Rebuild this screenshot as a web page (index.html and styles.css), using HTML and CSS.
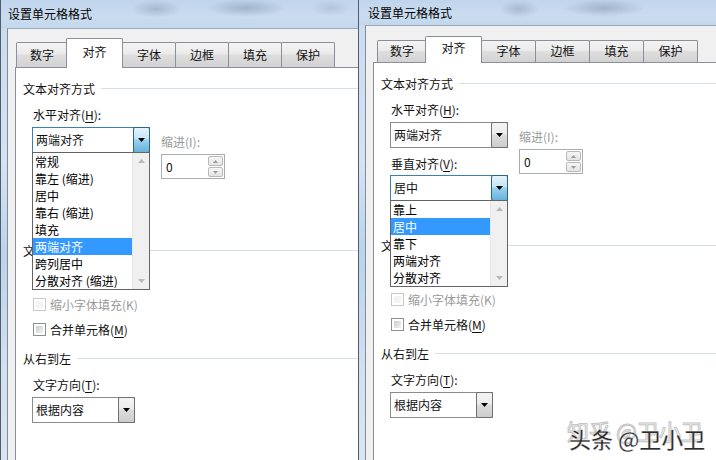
FILE: index.html
```html
<!DOCTYPE html>
<html lang="zh-CN">
<head>
<meta charset="utf-8">
<title>设置单元格格式</title>
<link rel="stylesheet" href="styles.css">
</head>
<body>
<div class="screen">

  <section class="win win-a">
    <div class="titlebar"><span class="title">设置单元格格式</span></div>
    <div class="client">
      <div class="tabs">
        <div class="tab tab-first">数字</div>
        <div class="tab tab-sel">对齐</div>
        <div class="tab">字体</div>
        <div class="tab">边框</div>
        <div class="tab">填充</div>
        <div class="tab">保护</div>
      </div>
      <div class="panel">
        <div class="group-head"><span>文本对齐方式</span></div>
        <div class="align-grid">
          <div class="label lbl-h">水平对齐(<u>H</u>):</div>
          <div class="combo combo-wide combo-1 is-open">
            <span class="combo-text">两端对齐</span>
            <span class="combo-btn"><svg width="7" height="4" viewBox="0 0 7 4"><path d="M0 0H7L3.5 4Z" fill="#000"/></svg></span>
            <div class="list">
              <div class="list-items">
                <div class="item">常规</div>
                <div class="item">靠左 (缩进)</div>
                <div class="item">居中</div>
                <div class="item">靠右 (缩进)</div>
                <div class="item">填充</div>
                <div class="item is-sel">两端对齐</div>
                <div class="item">跨列居中</div>
                <div class="item">分散对齐 (缩进)</div>
              </div>
              <div class="list-scroll">
                <svg width="7" height="4" viewBox="0 0 7 4"><path d="M0 4H7L3.5 0Z" fill="#b8b8b8"/></svg>
                <svg width="7" height="4" viewBox="0 0 7 4"><path d="M0 0H7L3.5 4Z" fill="#b8b8b8"/></svg>
              </div>
            </div>
          </div>
          <div class="indent">
            <div class="label is-disabled">缩进(I):</div>
            <div class="spin">
              <span class="spin-text">0</span>
              <span class="spin-btns">
                <span class="spin-btn"><svg width="5" height="3" viewBox="0 0 5 3"><path d="M0 3H5L2.5 0Z" fill="#9a9a9a"/></svg></span>
                <span class="spin-btn"><svg width="5" height="3" viewBox="0 0 5 3"><path d="M0 0H5L2.5 3Z" fill="#9a9a9a"/></svg></span>
              </span>
            </div>
          </div>
          <div class="label lbl-v is-covered">垂直对齐(<u>V</u>):</div>
          <div class="combo combo-wide combo-2 is-covered">
            <span class="combo-text">居中</span>
            <span class="combo-btn"><svg width="7" height="4" viewBox="0 0 7 4"><path d="M0 0H7L3.5 4Z" fill="#000"/></svg></span>
          </div>
        </div>
        <div class="group-head group-ctrl"><span>文本控制</span></div>
        <div class="check-row check-first is-covered"><span class="check"></span><span class="check-text">自动换行(<u>W</u>)</span></div>
        <div class="check-row is-disabled"><span class="check"></span><span class="check-text">缩小字体填充(K)</span></div>
        <div class="check-row"><span class="check"></span><span class="check-text">合并单元格(<u>M</u>)</span></div>
        <div class="group-head group-rtl"><span>从右到左</span></div>
        <div class="label lbl-dir">文字方向(<u>T</u>):</div>
        <div class="combo combo-narrow">
          <span class="combo-text">根据内容</span>
          <span class="combo-btn"><svg width="7" height="4" viewBox="0 0 7 4"><path d="M0 0H7L3.5 4Z" fill="#000"/></svg></span>
        </div>
      </div>
    </div>
  </section>

  <section class="win win-b">
    <div class="titlebar"><span class="title">设置单元格格式</span></div>
    <div class="client">
      <div class="tabs">
        <div class="tab tab-first">数字</div>
        <div class="tab tab-sel">对齐</div>
        <div class="tab">字体</div>
        <div class="tab">边框</div>
        <div class="tab">填充</div>
        <div class="tab">保护</div>
      </div>
      <div class="panel">
        <div class="group-head"><span>文本对齐方式</span></div>
        <div class="align-grid">
          <div class="label lbl-h">水平对齐(<u>H</u>):</div>
          <div class="combo combo-wide combo-1">
            <span class="combo-text">两端对齐</span>
            <span class="combo-btn"><svg width="7" height="4" viewBox="0 0 7 4"><path d="M0 0H7L3.5 4Z" fill="#000"/></svg></span>
          </div>
          <div class="indent">
            <div class="label is-disabled">缩进(I):</div>
            <div class="spin">
              <span class="spin-text">0</span>
              <span class="spin-btns">
                <span class="spin-btn"><svg width="5" height="3" viewBox="0 0 5 3"><path d="M0 3H5L2.5 0Z" fill="#9a9a9a"/></svg></span>
                <span class="spin-btn"><svg width="5" height="3" viewBox="0 0 5 3"><path d="M0 0H5L2.5 3Z" fill="#9a9a9a"/></svg></span>
              </span>
            </div>
          </div>
          <div class="label lbl-v">垂直对齐(<u>V</u>):</div>
          <div class="combo combo-wide combo-2 is-open">
            <span class="combo-text">居中</span>
            <span class="combo-btn"><svg width="7" height="4" viewBox="0 0 7 4"><path d="M0 0H7L3.5 4Z" fill="#000"/></svg></span>
            <div class="list">
              <div class="list-items">
                <div class="item">靠上</div>
                <div class="item is-sel">居中</div>
                <div class="item">靠下</div>
                <div class="item">两端对齐</div>
                <div class="item">分散对齐</div>
              </div>
              <div class="list-scroll">
                <svg width="7" height="4" viewBox="0 0 7 4"><path d="M0 4H7L3.5 0Z" fill="#b8b8b8"/></svg>
                <svg width="7" height="4" viewBox="0 0 7 4"><path d="M0 0H7L3.5 4Z" fill="#b8b8b8"/></svg>
              </div>
            </div>
          </div>
        </div>
        <div class="group-head group-ctrl"><span>文本控制</span></div>
        <div class="check-row check-first is-covered"><span class="check"></span><span class="check-text">自动换行(<u>W</u>)</span></div>
        <div class="check-row is-disabled"><span class="check"></span><span class="check-text">缩小字体填充(K)</span></div>
        <div class="check-row"><span class="check"></span><span class="check-text">合并单元格(<u>M</u>)</span></div>
        <div class="group-head group-rtl"><span>从右到左</span></div>
        <div class="label lbl-dir">文字方向(<u>T</u>):</div>
        <div class="combo combo-narrow">
          <span class="combo-text">根据内容</span>
          <span class="combo-btn"><svg width="7" height="4" viewBox="0 0 7 4"><path d="M0 0H7L3.5 4Z" fill="#000"/></svg></span>
        </div>
      </div>
    </div>
  </section>

  <div class="watermark">
    <span class="wm-ghost">知乎 @卫小卫</span>
    <span class="wm-front">头条 @卫小卫</span>
  </div>
</div>
</body>
</html>
```
FILE: styles.css
```css
* { box-sizing: border-box; margin: 0; padding: 0; }

body {
  margin: 0;
  width: 716px;
  height: 460px;
  overflow: hidden;
  background: #fff;
  color: #111;
  font-family: "Noto Sans CJK SC", "Microsoft YaHei", sans-serif;
  font-size: 12px;
}

.screen {
  position: relative;
  display: flex;
  width: 716px;
  height: 460px;
}

/* window frame */
.win {
  --title-h: 28px;
  --tabs-h: 38px;
  --tab-h: 25px;
  --tabsel-h: 30px;
  --tab-first-ml: 1px;
  --tab-first-w: 52px;
  --tab-w: 54px;
  width: 358px;
  height: 460px;
  display: flex;
  flex-direction: column;
  border-left: 1px solid #4e5e70;
  background: linear-gradient(180deg, #c9dbee 0%, #d6e3f1 35%, #bcd3ea 55%, #d3e0ee 80%, #dbe5f0 100%);
}
.win-b {
  --title-h: 25px;
  --tabs-h: 36px;
  --tab-h: 22px;
  --tabsel-h: 27px;
  --tab-first-ml: 4px;
  --tab-first-w: 50px;
  --tab-w: 55px;
}

.titlebar {
  height: var(--title-h);
  flex: none;
  padding-left: 7px;
  display: flex;
  align-items: center;
  background:
    radial-gradient(ellipse 26px 9px at 155px 9px, rgba(110, 128, 155, 0.35), transparent),
    radial-gradient(ellipse 40px 9px at 245px 8px, rgba(100, 120, 150, 0.38), transparent),
    radial-gradient(ellipse 20px 8px at 330px 8px, rgba(120, 140, 165, 0.25), transparent),
    linear-gradient(180deg, #c0d5ec 0%, #cadcef 60%, #c3d7ec 100%);
}
.win-b .titlebar {
  padding-left: 9px;
  background:
    radial-gradient(ellipse 20px 9px at 160px 9px, rgba(110, 128, 155, 0.35), transparent),
    radial-gradient(ellipse 40px 9px at 245px 8px, rgba(100, 120, 150, 0.38), transparent),
    linear-gradient(180deg, #c0d5ec 0%, #cadcef 60%, #c3d7ec 100%);
}
.title { color: #000; line-height: 16px; }

.client {
  flex: 1;
  min-height: 0;
  margin-left: 6px;
  border-left: 1px solid #7d8d9f;
  border-top: 1px solid #9aabbd;
  background: #f0f0f0;
  padding-left: 7px;
  display: flex;
  flex-direction: column;
}

/* tabs */
.tabs {
  height: var(--tabs-h);
  flex: none;
  display: flex;
  align-items: flex-end;
}
.tab {
  position: relative;
  width: var(--tab-w);
  height: var(--tab-h);
  margin-left: -1px;
  border: 1px solid #8c8f98;
  border-bottom: none;
  border-radius: 2px 2px 0 0;
  background: linear-gradient(180deg, #f3f3f3 0%, #ebebeb 45%, #dedede 50%, #d2d2d2 100%);
  text-align: center;
  line-height: calc(var(--tab-h) - 2px);
  color: #111;
}
.tab-first {
  width: var(--tab-first-w);
  margin-left: var(--tab-first-ml);
}
.tab-sel {
  z-index: 2;
  width: 57px;
  height: var(--tabsel-h);
  margin-left: -2px;
  margin-bottom: -1px;
  background: #fff;
  line-height: calc(var(--tabsel-h) - 5px);
}

/* panel */
.panel {
  flex: 1;
  min-height: 0;
  background: #fff;
  border: 1px solid #8c8f98;
  border-right: none;
  border-bottom: none;
  padding: 12px 0 0 7px;
  display: flex;
  flex-direction: column;
  align-items: flex-start;
}

.group-head {
  align-self: stretch;
  display: flex;
  align-items: center;
  gap: 6px;
  height: 17px;
  line-height: 17px;
}
.group-head::after {
  content: "";
  flex: 1;
  height: 1px;
  background: #d5dfe5;
}
.group-ctrl { margin-top: 36px; }
.group-rtl { margin-top: 12px; }

.label {
  height: 17px;
  line-height: 17px;
  white-space: nowrap;
}
.label u, .check-text u { text-decoration-thickness: 1px; text-underline-offset: 2px; }
.is-disabled { color: #9a9a9a; }

/* parts that sit fully under an open drop-down list */
.is-covered { visibility: hidden; }

.align-grid {
  margin-top: 9px;
  margin-left: 10px;
  display: grid;
  grid-template-columns: 118px auto;
  column-gap: 10px;
  align-items: start;
}
.lbl-h { grid-column: 1; grid-row: 1; }
.combo-1 { grid-column: 1; grid-row: 2; margin-top: 4px; }
.lbl-v { grid-column: 1; grid-row: 3; margin-top: 7px; }
.combo-2 { grid-column: 1; grid-row: 4; margin-top: 3px; }
.indent { grid-column: 2; grid-row: 2 / 5; margin-top: 10px; }

/* combo box */
.combo {
  position: relative;
  display: flex;
  align-items: stretch;
  height: 26px;
  margin-left: -1px;
  border: 1px solid #8b8b8b;
  background: #fff;
}
.combo-wide { width: 118px; }
.combo-narrow { width: 103px; margin-left: 9px; margin-top: 4px; }
.combo-text {
  flex: 1;
  padding-left: 3px;
  line-height: 24px;
  white-space: nowrap;
}
.combo-btn {
  flex: none;
  width: 17px;
  margin: -1px -1px -1px 0;
  border: 1px solid #707070;
  border-radius: 2px;
  background: linear-gradient(180deg, #f4f4f4 0%, #ececec 45%, #dcdcdc 50%, #cdcdcd 100%);
  display: flex;
  align-items: center;
  justify-content: center;
}
.is-open { border-color: #3c7fb1; }
.is-open > .combo-btn {
  border-color: #2c628b;
  background: linear-gradient(180deg, #e5f4fc 0%, #c4e5f6 45%, #98d1ef 50%, #68b3db 100%);
}

/* dropdown list (overlay) */
.list {
  position: absolute;
  z-index: 10;
  left: -1px;
  top: 100%;
  width: 118px;
  display: flex;
  background: #fff;
  border: 1px solid #646464;
  visibility: visible;
}
.list-items { flex: 1; }
.item {
  height: 17px;
  line-height: 17px;
  padding-left: 2px;
  white-space: nowrap;
  color: #000;
}
.item.is-sel { background: #3399ff; color: #fff; }
.list-scroll {
  flex: none;
  width: 17px;
  background: #f0f0f0;
  border-left: 1px solid #e6e6e6;
  display: flex;
  flex-direction: column;
  justify-content: space-between;
  align-items: center;
  padding: 6px 0 6px;
}

/* spin box */
.spin {
  margin-top: 4px;
  width: 64px;
  height: 25px;
  border: 1px solid #a9acb3;
  background: #fff;
  display: flex;
  align-items: stretch;
}
.spin-text { flex: 1; padding-left: 4px; line-height: 23px; }
.spin-btns {
  width: 16px;
  padding: 1px 1px 1px 0;
  display: flex;
  flex-direction: column;
  gap: 1px;
}
.spin-btn {
  flex: 1;
  border: 1px solid #b9b9b9;
  border-radius: 2px;
  background: linear-gradient(180deg, #f6f6f6, #e4e4e4);
  display: flex;
  align-items: center;
  justify-content: center;
}

/* check boxes */
.check-row {
  margin-left: 10px;
  margin-top: 8px;
  height: 17px;
  display: flex;
  align-items: center;
  gap: 4px;
  white-space: nowrap;
}
.check-first { margin-top: 12px; }
.check {
  width: 13px;
  height: 13px;
  border: 1px solid #8e8f8f;
  background: #fff;
  display: block;
  position: relative;
}
.check::after {
  content: "";
  position: absolute;
  inset: 2px;
  background: linear-gradient(135deg, #c9ccd1, #f2f2f2);
}
.check-row.is-disabled .check { border-color: #c9c9c9; }
.check-row.is-disabled .check::after { background: #f4f4f4; }
.check-text { line-height: 17px; }

.lbl-dir { margin-left: 10px; margin-top: 9px; }

/* watermark overlay */
.watermark {
  position: absolute;
  left: 567px;
  top: 418px;
  width: 150px;
  height: 34px;
  font-size: 22px;
  line-height: 24px;
  white-space: nowrap;
}
.wm-ghost {
  position: absolute;
  left: 0;
  top: 0;
  color: rgba(255, 255, 255, 0.9);
  -webkit-text-stroke: 1px #c4c4c4;
}
.wm-front {
  position: absolute;
  left: 2px;
  top: 8px;
  color: #2a2a2a;
  font-weight: 500;
  -webkit-text-stroke: 0.3px #fff;
}
```
